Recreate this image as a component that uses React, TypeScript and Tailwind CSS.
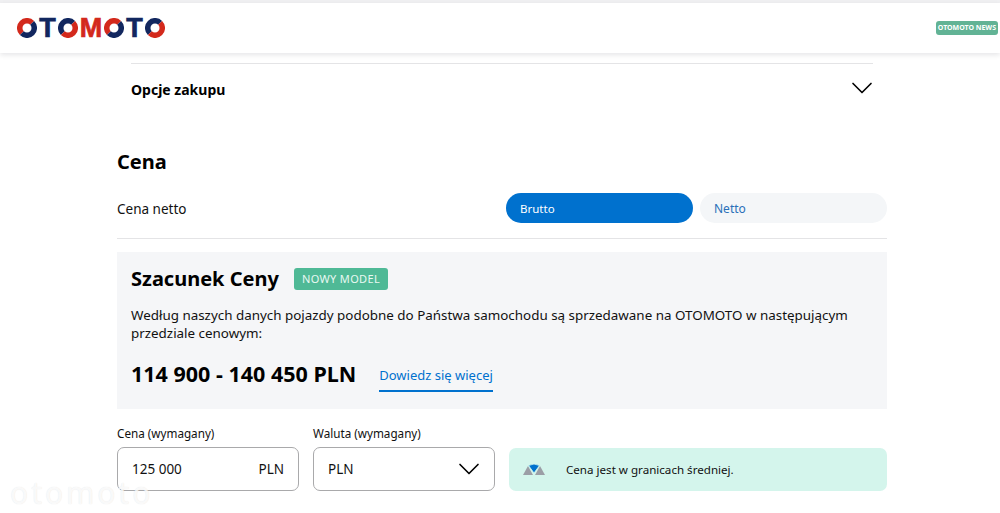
import { ChevronDown } from "lucide-react"

// one ring of the logo, split in a navy and a red half along a diagonal
function LogoO({ flip }: { flip?: boolean }) {
  const a = flip ? "#d3291c" : "#12275f"
  const b = flip ? "#12275f" : "#d3291c"
  return (
    <svg width="20" height="20" viewBox="0 0 20 20" className="shrink-0">
      <path d="M2.9 17.1A10 10 0 0 1 17.1 2.9L13.2 6.8A4.5 4.5 0 0 0 6.8 13.2Z" fill={b} />
      <path d="M17.1 2.9A10 10 0 0 1 2.9 17.1L6.8 13.2A4.5 4.5 0 0 0 13.2 6.8Z" fill={a} />
    </svg>
  )
}

function Logo() {
  return (
    <div className="flex items-center text-[27px] leading-[20px] font-bold [-webkit-text-stroke:0.7px] font-['Liberation_Sans',sans-serif]">
      <LogoO />
      <span className="w-[21px] text-center text-[#12275f]">T</span>
      <LogoO flip />
      <span className="w-[26px] text-center text-[#d3291c]">M</span>
      <LogoO />
      <span className="w-[21px] text-center text-[#12275f]">T</span>
      <LogoO flip />
    </div>
  )
}

export default function App() {
  return (
    <div className="relative h-[513px] w-[1000px] overflow-hidden bg-white text-[13.5px] text-[#111] font-['Noto_Sans','Open_Sans',sans-serif]">
      {/* Header */}
      <div className="h-[3px] bg-[#f0f0f2]" />
      <header className="flex h-[50px] items-center justify-between pr-[2px] pl-[17px] shadow-[0_2px_5px_rgba(0,0,30,0.1)]">
        <Logo />
        <span className="rounded-[3px] bg-[#62b395] px-[2px] py-[1px] text-[7px] leading-[12px] font-bold text-white">OTOMOTO NEWS</span>
      </header>

      <main className="ml-[117px] w-[770px]">
        {/* Opcje zakupu */}
        <div className="mx-[14px] mt-[10px] flex h-[52px] items-center justify-between border-t border-[#e4e4e6]">
          <h3 className="text-[14px] font-bold text-black">Opcje zakupu</h3>
          <ChevronDown className="-mt-[3px] -mr-[7px] h-[36px] w-[36px] text-black" strokeWidth={1.1} />
        </div>

        <h2 className="mt-[33px] text-[20px] leading-[28px] font-bold text-black">Cena</h2>

        {/* Brutto / Netto */}
        <div className="mt-[17px] flex h-[46px] border-b border-[#e4e4e6] pb-[15px]">
          <span className="flex w-[389px] items-center pt-[2px]">Cena netto</span>
          <div className="flex gap-[7px]">
            <button className="flex h-[30px] w-[187px] items-center rounded-full bg-[#0071ce] px-[14px] pt-[2px] text-[11.5px] text-white">Brutto</button>
            <button className="flex h-[30px] w-[187px] items-center rounded-full bg-[#f4f6f8] px-[14px] pt-[2px] text-[12px] text-[#2a70b8]">Netto</button>
          </div>
        </div>

        {/* Szacunek Ceny */}
        <section className="mt-[13px] h-[157px] bg-[#f5f6f8] px-[14px] pt-[15px]">
          <div className="flex items-center gap-[15px]">
            <h2 className="text-[20px] leading-[24px] font-bold text-black">Szacunek Ceny</h2>
            <span className="rounded-[3px] bg-[#4fb996] px-[8px] py-[3px] text-[11px] leading-[16px] tracking-[0.35px] text-[#e8f8f2]">NOWY MODEL</span>
          </div>
          <p className="mt-[15px] w-[742px] text-[13.4px] leading-[18px]">
            Według naszych danych pojazdy podobne do Państwa samochodu są sprzedawane na OTOMOTO w następującym przedziale cenowym:
          </p>
          <div className="mt-[18px] flex items-start gap-[23px]">
            <strong className="text-[21.5px] leading-[28px] text-black">114 900 - 140 450 PLN</strong>
            <a className="border-b-2 border-[#0071ce] pt-[5px] pb-[5px] text-[13px] leading-[20px] text-[#0071ce]">Dowiedz się więcej</a>
          </div>
        </section>

        {/* Cena / Waluta */}
        <div className="mt-[16px] flex items-end">
          <label className="w-[182px]">
            <span className="block text-[11.7px] leading-[16px]">Cena (wymagany)</span>
            <div className="mt-[6px] flex h-[44px] items-center justify-between rounded-[7px] border border-[#a9a9ab] px-[14px]">
              <span>125 000</span>
              <span>PLN</span>
            </div>
          </label>
          <label className="ml-[14px] w-[182px]">
            <span className="block text-[11.7px] leading-[16px]">Waluta (wymagany)</span>
            <div className="mt-[6px] flex h-[44px] items-center justify-between rounded-[7px] border border-[#a9a9ab] px-[14px]">
              <span>PLN</span>
              <ChevronDown className="-mr-[7px] h-[36px] w-[36px] text-black" strokeWidth={1.1} />
            </div>
          </label>
          <div className="ml-[14px] flex h-[43px] w-[378px] items-center rounded-[7px] bg-[#d4f5ec] pl-[14px] text-[11.6px]">
            <svg width="22" height="13" viewBox="0 0 22 13" className="shrink-0">
              <path d="M0 12 L5 3 L10 12Z" fill="#9b9ea6" />
              <path d="M12 12 L17 3 L22 12Z" fill="#9b9ea6" />
              <path d="M5.5 2.5 Q11 -0.5 16.5 2.5 L11 10Z" fill="#0071ce" stroke="#d4f5ec" strokeWidth="0.8" />
            </svg>
            <span className="ml-[21px]">Cena jest w granicach średniej.</span>
          </div>
        </div>
      </main>

      {/* Watermark */}
      <span className="pointer-events-none absolute top-[480px] left-[10px] text-[30px] leading-[25px] tracking-[3px] whitespace-nowrap text-white/80 [text-shadow:0_0_1px_rgba(0,0,0,0.12)]">otomoto</span>
    </div>
  )
}
